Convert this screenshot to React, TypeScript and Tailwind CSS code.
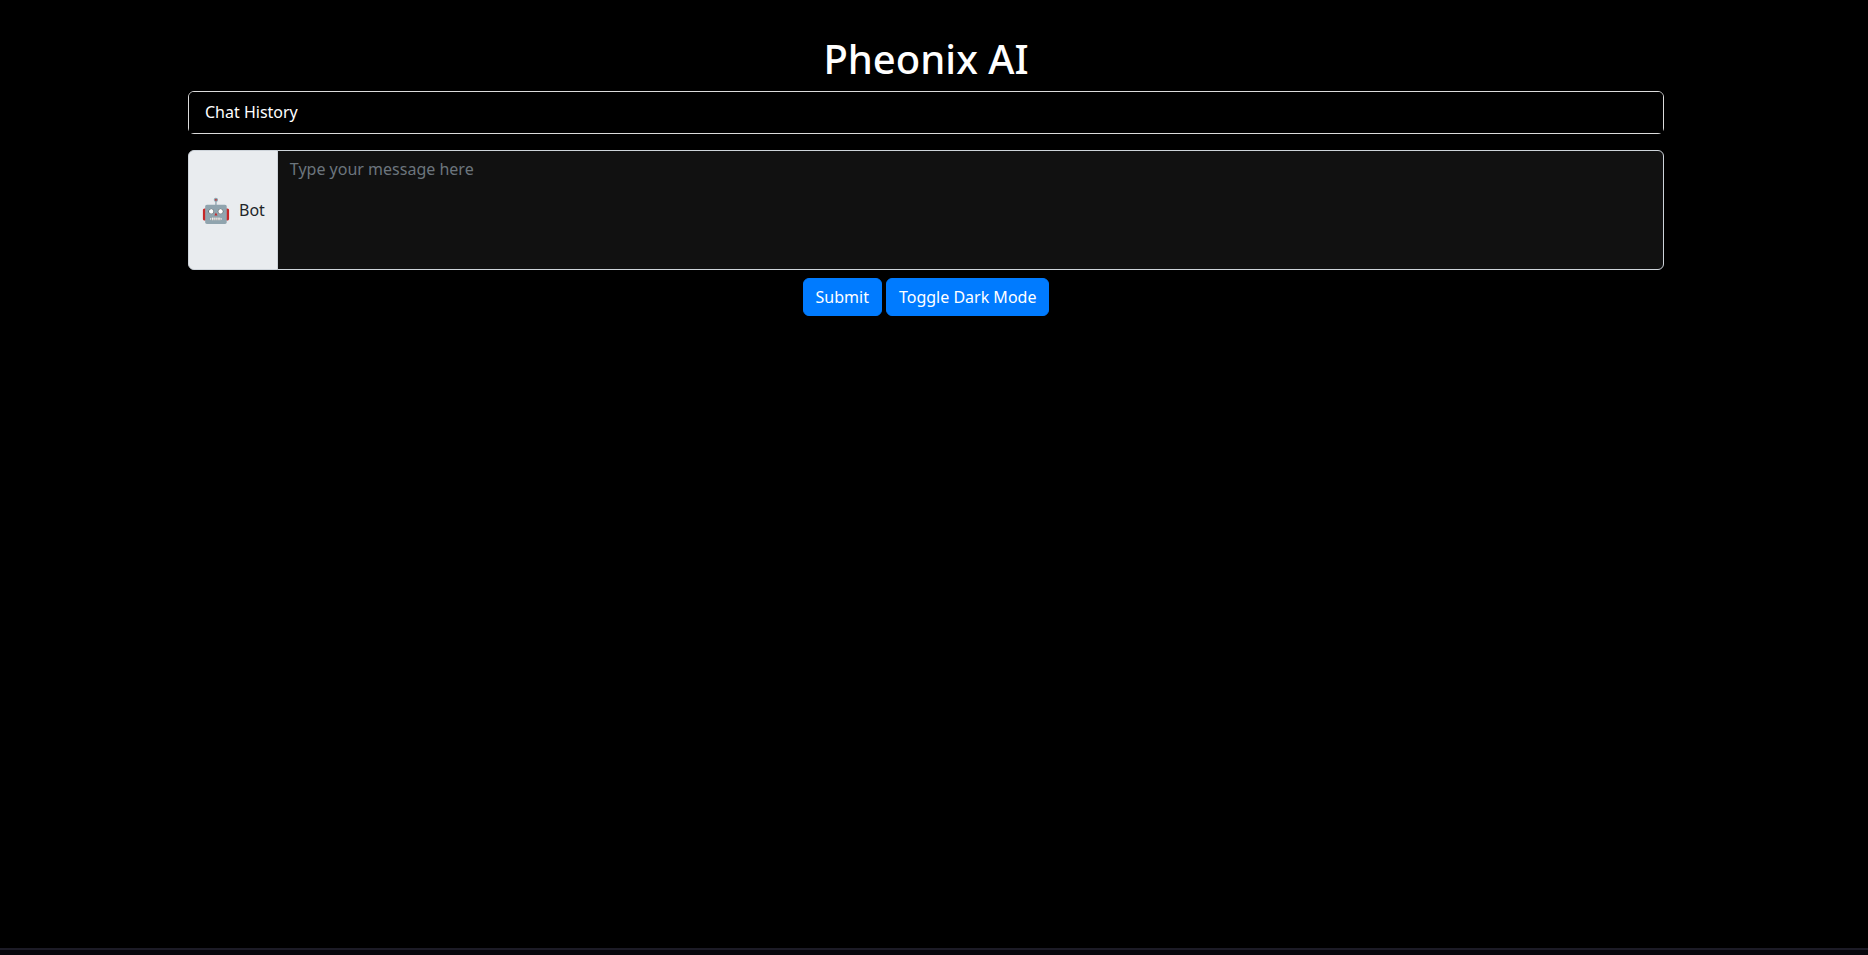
import { useState } from "react";

export default function App() {
  const [dark, setDark] = useState(true);
  const [message, setMessage] = useState("");
  const [history, setHistory] = useState<string[]>([]);

  const submit = () => {
    if (!message.trim()) return;
    setHistory([...history, message]);
    setMessage("");
  };

  const page = dark ? "bg-black text-white" : "bg-white text-[#212529]";
  const field = dark ? "bg-[#111111] text-white" : "bg-white text-[#212529]";

  return (
    <div className={`flex min-h-screen flex-col font-['Noto_Sans',sans-serif] text-base ${page}`}>
      <main className="flex w-full grow flex-col items-center pr-4 pt-[35px]">
        <div className="w-full max-w-[1476px]">
          <h1 className="mb-2 text-center text-[40px] leading-[48px] font-medium">Pheonix AI</h1>

          <section className="rounded-md border border-[#dcdcdc]">
            <h2 className={`rounded-t-[5px] px-4 py-2 leading-[25px] ${page}`}>Chat History</h2>
            {history.map((entry, index) => (
              <p key={index} className="px-4 py-1">{entry}</p>
            ))}
          </section>

          <div className="mt-4 mb-2 flex h-[120px]">
            <label
              htmlFor="message"
              className="flex items-center gap-2 rounded-l-md border border-[#ced4da] bg-[#e9ecef] px-3 text-[#212529]"
            >
              <span className="text-2xl" aria-hidden="true">🤖</span>
              Bot
            </label>
            <textarea
              id="message"
              value={message}
              onChange={(event) => setMessage(event.target.value)}
              placeholder="Type your message here"
              className={`-ml-px grow resize-none rounded-r-md border border-[#ced4da] px-3 py-1.5 leading-6 placeholder:text-[#6c757d] ${field}`}
            />
          </div>

          <div className="flex justify-center gap-1 text-white">
            <button
              type="button"
              onClick={submit}
              className="rounded-md border border-[#007bff] bg-[#007bff] px-3 py-1.5 leading-6"
            >
              Submit
            </button>
            <button
              type="button"
              onClick={() => setDark(!dark)}
              className="rounded-md border border-[#007bff] bg-[#007bff] px-3 py-1.5 leading-6"
            >
              Toggle Dark Mode
            </button>
          </div>
        </div>
      </main>
      <footer className="h-[7px] border-t-2 border-[#1c1b26] bg-[#07060c]" />
    </div>
  );
}
